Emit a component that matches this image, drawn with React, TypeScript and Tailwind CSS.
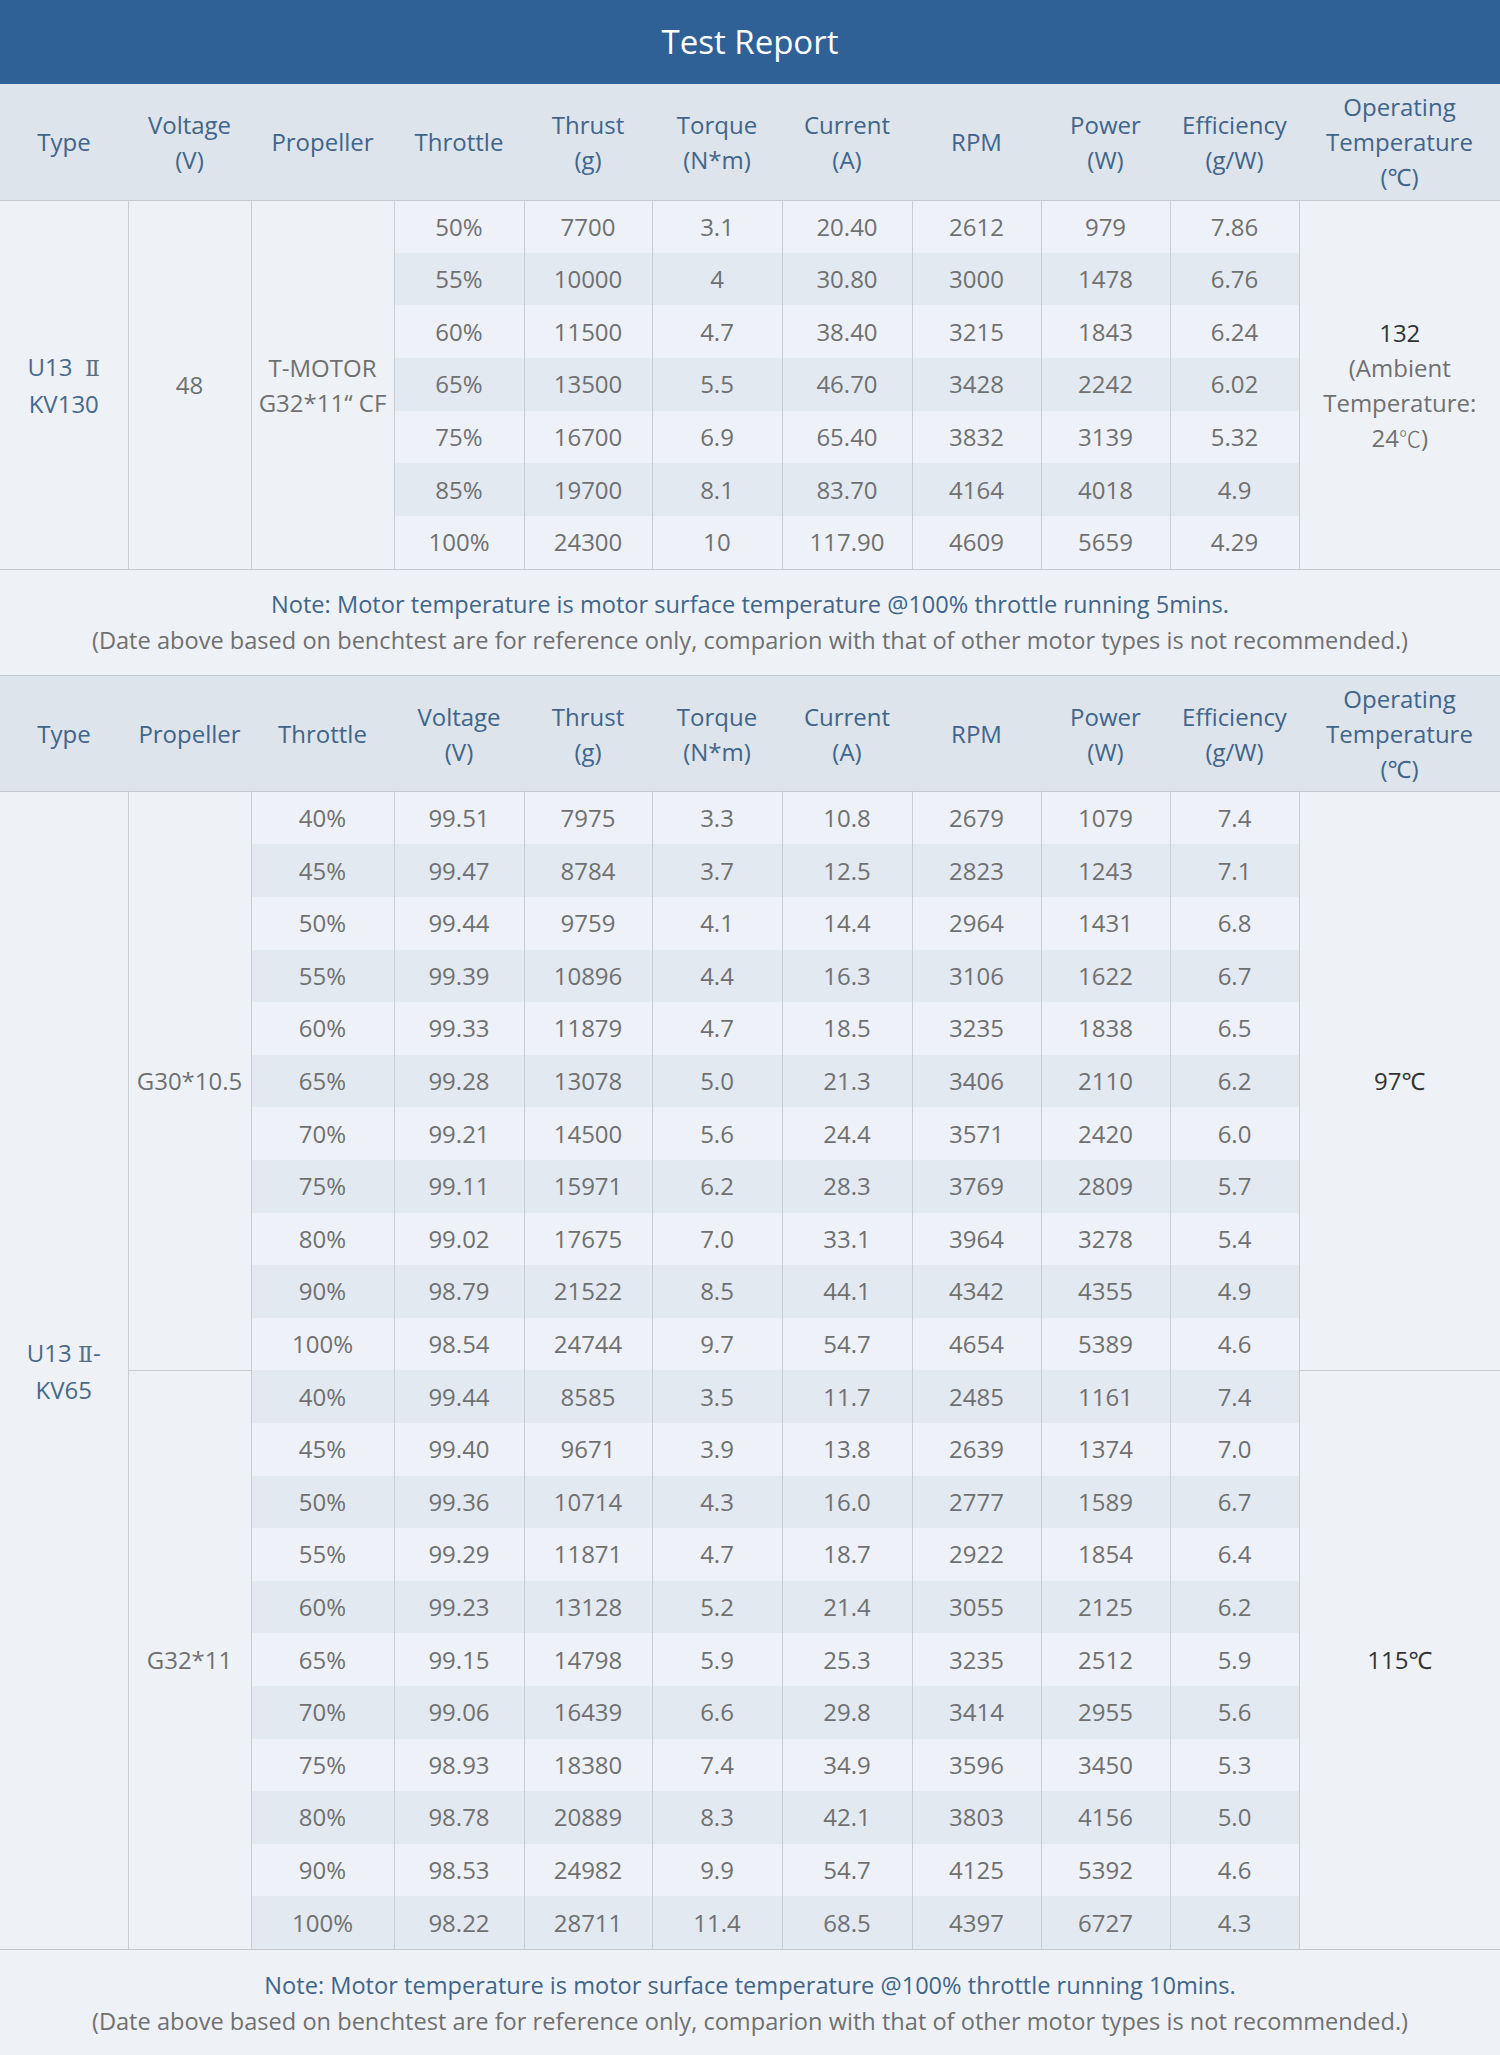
import React from "react";

type Row = string[];

const motorOne: Row[] = [
  ["50%", "7700", "3.1", "20.40", "2612", "979", "7.86"],
  ["55%", "10000", "4", "30.80", "3000", "1478", "6.76"],
  ["60%", "11500", "4.7", "38.40", "3215", "1843", "6.24"],
  ["65%", "13500", "5.5", "46.70", "3428", "2242", "6.02"],
  ["75%", "16700", "6.9", "65.40", "3832", "3139", "5.32"],
  ["85%", "19700", "8.1", "83.70", "4164", "4018", "4.9"],
  ["100%", "24300", "10", "117.90", "4609", "5659", "4.29"],
];

const g30: Row[] = [
  ["40%", "99.51", "7975", "3.3", "10.8", "2679", "1079", "7.4"],
  ["45%", "99.47", "8784", "3.7", "12.5", "2823", "1243", "7.1"],
  ["50%", "99.44", "9759", "4.1", "14.4", "2964", "1431", "6.8"],
  ["55%", "99.39", "10896", "4.4", "16.3", "3106", "1622", "6.7"],
  ["60%", "99.33", "11879", "4.7", "18.5", "3235", "1838", "6.5"],
  ["65%", "99.28", "13078", "5.0", "21.3", "3406", "2110", "6.2"],
  ["70%", "99.21", "14500", "5.6", "24.4", "3571", "2420", "6.0"],
  ["75%", "99.11", "15971", "6.2", "28.3", "3769", "2809", "5.7"],
  ["80%", "99.02", "17675", "7.0", "33.1", "3964", "3278", "5.4"],
  ["90%", "98.79", "21522", "8.5", "44.1", "4342", "4355", "4.9"],
  ["100%", "98.54", "24744", "9.7", "54.7", "4654", "5389", "4.6"],
];

const g32: Row[] = [
  ["40%", "99.44", "8585", "3.5", "11.7", "2485", "1161", "7.4"],
  ["45%", "99.40", "9671", "3.9", "13.8", "2639", "1374", "7.0"],
  ["50%", "99.36", "10714", "4.3", "16.0", "2777", "1589", "6.7"],
  ["55%", "99.29", "11871", "4.7", "18.7", "2922", "1854", "6.4"],
  ["60%", "99.23", "13128", "5.2", "21.4", "3055", "2125", "6.2"],
  ["65%", "99.15", "14798", "5.9", "25.3", "3235", "2512", "5.9"],
  ["70%", "99.06", "16439", "6.6", "29.8", "3414", "2955", "5.6"],
  ["75%", "98.93", "18380", "7.4", "34.9", "3596", "3450", "5.3"],
  ["80%", "98.78", "20889", "8.3", "42.1", "3803", "4156", "5.0"],
  ["90%", "98.53", "24982", "9.9", "54.7", "4125", "5392", "4.6"],
  ["100%", "98.22", "28711", "11.4", "68.5", "4397", "6727", "4.3"],
];

const Cols = () => (
  <colgroup>
    <col className="w-[128px]" />
    <col className="w-[123px]" />
    <col className="w-[143px]" />
    <col className="w-[130px]" />
    <col className="w-[128px]" />
    <col className="w-[130px]" />
    <col className="w-[130px]" />
    <col className="w-[129px]" />
    <col className="w-[129px]" />
    <col className="w-[129px]" />
    <col className="w-[201px]" />
  </colgroup>
);

const Head = ({ labels }: { labels: string[][] }) => (
  <thead>
    <tr className="h-[116px] bg-[#dde4eb] border-b border-[#c4c9ce]">
      {labels.map((lines, i) => (
        <th key={i} className="p-0 font-normal text-[24px] leading-[35px] text-[#41658a] align-middle">
          {lines.map((l, j) => (
            <div key={j}>{l}</div>
          ))}
        </th>
      ))}
    </tr>
  </thead>
);

const merged = "bg-[#eef2f7] border-r border-[#c9cdd2] text-center align-middle p-0";
const cell = "border-r border-[#c9cdd2] text-center align-middle p-0 text-[#707070]";

// roman numeral drawn in a thin serif, as on the source page
const Roman = () => <span className="font-['DejaVu_Serif','Liberation_Serif',serif] text-[22px] font-light text-[#5a6f84]">Ⅱ</span>;

const DataCells = ({ values, idx }: { values: string[]; idx: number }) => (
  <>
    {values.map((v, i) => (
      <td key={i} className={`${cell} ${idx % 2 === 0 ? "bg-[#eef2f8]" : "bg-[#e3e9f0]"}`}>
        {v}
      </td>
    ))}
  </>
);

const Note = ({ mins, last }: { mins: string; last?: boolean }) => (
  <div
    className={`flex h-[107px] flex-col items-center justify-center text-[23.6px] leading-[36px] ${
      last ? "border-t border-[#c4c9ce]" : "border-y border-[#c4c9ce]"
    }`}
  >
    <p className="text-[#41658a]">
      Note: Motor temperature is motor surface temperature @100% throttle running {mins}.
    </p>
    <p className="text-[#707070]">
      (Date above based on benchtest are for reference only, comparion with that of other motor types is not recommended.)
    </p>
  </div>
);

export default function App() {
  return (
    <div className="w-[1500px] bg-[#eef2f7] font-['Open_Sans','Noto_Sans','Noto_Sans_CJK_SC',sans-serif]">
      <div className="flex h-[84px] items-center justify-center bg-[#2f6096] text-[33px] text-white">
        Test Report
      </div>

      <table className="w-full table-fixed border-collapse text-[24px]">
        <Cols />
        <Head
          labels={[
            ["Type"],
            ["Voltage", "(V)"],
            ["Propeller"],
            ["Throttle"],
            ["Thrust", "(g)"],
            ["Torque", "(N*m)"],
            ["Current", "(A)"],
            ["RPM"],
            ["Power", "(W)"],
            ["Efficiency", "(g/W)"],
            ["Operating", "Temperature", "(℃)"],
          ]}
        />
        <tbody>
          {motorOne.map((r, i) => (
            <tr key={i} className="h-[52.7px]">
              {i === 0 && (
                <>
                  <td rowSpan={7} className={`${merged} leading-[35px] text-[#48698a]`}>
                    U13 &nbsp;<Roman />
                    <br />
                    KV130
                  </td>
                  <td rowSpan={7} className={`${merged} text-[#707070]`}>
                    48
                  </td>
                  <td rowSpan={7} className={`${merged} leading-[35px] text-[#707070]`}>
                    T-MOTOR
                    <br />
                    G32*11“ CF
                  </td>
                </>
              )}
              <DataCells values={r} idx={i} />
              {i === 0 && (
                <td rowSpan={7} className="bg-[#eef2f7] p-0 text-center align-middle leading-[35px]">
                  <div className="text-[#333333]">132</div>
                  <div className="text-[#707070]">(Ambient</div>
                  <div className="text-[#707070]">Temperature:</div>
                  <div className="text-[#707070]">
                    24<span className="font-['Noto_Sans_CJK_SC',sans-serif] text-[22px] font-light">℃</span>)
                  </div>
                </td>
              )}
            </tr>
          ))}
        </tbody>
      </table>

      <Note mins="5mins" />

      <table className="w-full table-fixed border-collapse text-[24px]">
        <Cols />
        <Head
          labels={[
            ["Type"],
            ["Propeller"],
            ["Throttle"],
            ["Voltage", "(V)"],
            ["Thrust", "(g)"],
            ["Torque", "(N*m)"],
            ["Current", "(A)"],
            ["RPM"],
            ["Power", "(W)"],
            ["Efficiency", "(g/W)"],
            ["Operating", "Temperature", "(℃)"],
          ]}
        />
        <tbody>
          {g30.map((r, i) => (
            <tr key={`a${i}`} className="h-[52.6px]">
              {i === 0 && (
                <>
                  <td rowSpan={22} className={`${merged} leading-[35px] text-[#48698a]`}>
                    U13 <Roman />-
                    <br />
                    KV65
                  </td>
                  <td rowSpan={11} className={`${merged} border-b text-[#707070]`}>
                    G30*10.5
                  </td>
                </>
              )}
              <DataCells values={r} idx={i} />
              {i === 0 && (
                <td rowSpan={11} className="border-b border-[#c9cdd2] bg-[#eef2f7] p-0 text-center align-middle text-[#333333]">
                  97℃
                </td>
              )}
            </tr>
          ))}
          {g32.map((r, i) => (
            <tr key={`b${i}`} className="h-[52.6px]">
              {i === 0 && (
                <td rowSpan={11} className={`${merged} text-[#707070]`}>
                  G32*11
                </td>
              )}
              <DataCells values={r} idx={i + 11} />
              {i === 0 && (
                <td rowSpan={11} className="bg-[#eef2f7] p-0 text-center align-middle text-[#333333]">
                  115℃
                </td>
              )}
            </tr>
          ))}
        </tbody>
      </table>

      <Note mins="10mins" last />
    </div>
  );
}
